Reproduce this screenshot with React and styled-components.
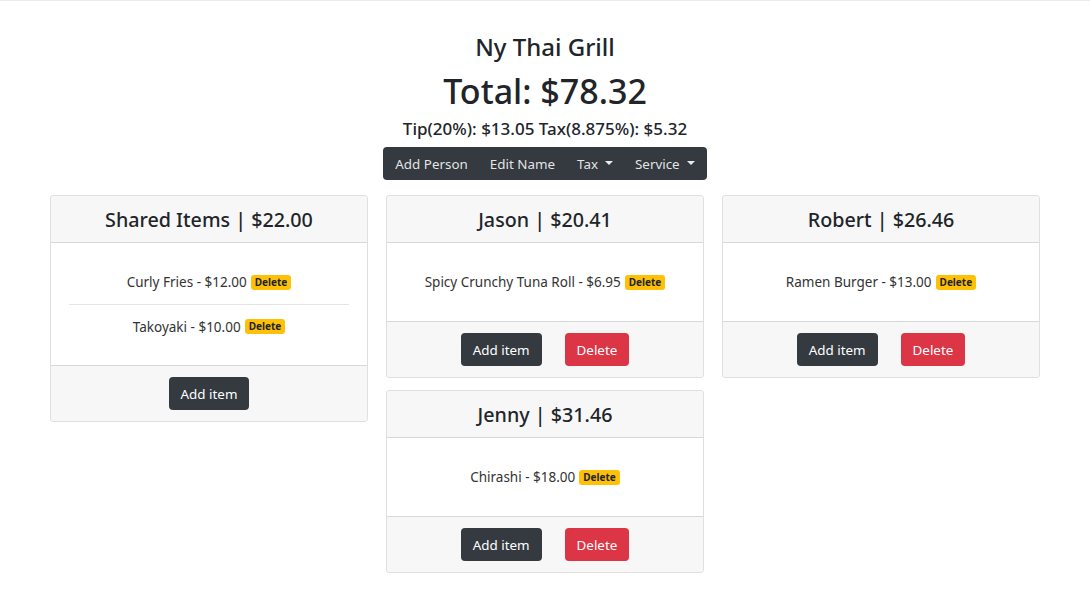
import React from "react";
import styled, { createGlobalStyle } from "styled-components";

const Global = createGlobalStyle`
  html, body { margin: 0; padding: 0; background: #fff; }
  body {
    font-family: "Noto Sans", "Open Sans", sans-serif;
    color: #212529;
    border-top: 1px solid #ececec;
  }
  * { box-sizing: border-box; }
`;

const Page = styled.div`
  width: 990px;
  margin: 0 auto;
  padding-top: 31px;
  display: flex;
  flex-direction: column;
  align-items: center;
`;

const Title = styled.h3`
  margin: 0;
  font-size: 24px;
  font-weight: 500;
  line-height: 30px;
`;

const Total = styled.h1`
  margin: 7px 0 0;
  font-size: 34px;
  font-weight: 500;
  line-height: 44px;
`;

const Sub = styled.h5`
  margin: 4px 0 0;
  font-size: 17px;
  font-weight: 500;
  line-height: 24px;
`;

const Nav = styled.nav`
  margin-top: 6px;
  height: 33px;
  background: #343a40;
  border-radius: 4px;
  display: flex;
  align-items: center;
  padding: 0 12px;
  gap: 22px;
`;

const NavItem = styled.span`
  color: rgba(255, 255, 255, 0.88);
  font-size: 13.4px;
  display: inline-flex;
  align-items: center;
  gap: 7px;
`;

const Caret = styled.span`
  width: 0;
  height: 0;
  border-left: 4.5px solid transparent;
  border-right: 4.5px solid transparent;
  border-top: 4.5px solid rgba(255, 255, 255, 0.9);
  margin-bottom: 1px;
`;

const Columns = styled.div`
  margin-top: 15px;
  width: 100%;
  display: grid;
  grid-template-columns: repeat(3, 1fr);
  column-gap: 18px;
  align-items: start;
`;

const Column = styled.div`
  display: flex;
  flex-direction: column;
  gap: 12px;
`;

const Card = styled.div`
  border: 1px solid rgba(0, 0, 0, 0.125);
  border-radius: 4px;
  overflow: hidden;
  background: #fff;
`;

const CardHeader = styled.div`
  background: #f7f7f7;
  border-bottom: 1px solid rgba(0, 0, 0, 0.125);
  height: 47px;
  display: flex;
  align-items: center;
  justify-content: center;
`;

const CardTitle = styled.h3`
  margin: 0;
  font-size: 19.7px;
  font-weight: 500;
`;

const CardBody = styled.div`
  padding: 17px 18px;
`;

const List = styled.ul`
  list-style: none;
  margin: 0;
  padding: 0;
`;

const Item = styled.li`
  height: 44px;
  display: flex;
  align-items: center;
  justify-content: center;
  gap: 4px;
  font-size: 13.5px;
  color: #333;
  & + & { border-top: 1px solid rgba(0, 0, 0, 0.1); }
`;

const Badge = styled.span`
  background: #ffc107;
  color: #212529;
  font-size: 10px;
  font-weight: 700;
  border-radius: 3px;
  padding: 1px 4px;
  line-height: 13px;
`;

const CardFooter = styled.div`
  background: #f7f7f7;
  border-top: 1px solid rgba(0, 0, 0, 0.125);
  height: 56px;
  display: flex;
  align-items: center;
  justify-content: center;
  gap: 23px;
`;

const Button = styled.button`
  height: 33px;
  border: none;
  border-radius: 4px;
  padding: 0 12px;
  font-family: inherit;
  font-size: 13.4px;
  color: #fff;
  background: ${(p) => (p.$variant === "danger" ? "#dc3545" : "#343a40")};
`;

function PersonCard({ title, items, shared }) {
  return (
    <Card>
      <CardHeader>
        <CardTitle>{title}</CardTitle>
      </CardHeader>
      <CardBody>
        <List>
          {items.map((it) => (
            <Item key={it}>
              {it} <Badge>Delete</Badge>
            </Item>
          ))}
        </List>
      </CardBody>
      <CardFooter>
        <Button>Add item</Button>
        {!shared && <Button $variant="danger">Delete</Button>}
      </CardFooter>
    </Card>
  );
}

export default function App() {
  return (
    <>
      <Global />
      <Page>
        <Title>Ny Thai Grill</Title>
        <Total>Total: $78.32</Total>
        <Sub>Tip(20%): $13.05 Tax(8.875%): $5.32</Sub>
        <Nav>
          <NavItem>Add Person</NavItem>
          <NavItem>Edit Name</NavItem>
          <NavItem>
            Tax <Caret />
          </NavItem>
          <NavItem>
            Service <Caret />
          </NavItem>
        </Nav>
        <Columns>
          <Column>
            <PersonCard
              shared
              title="Shared Items | $22.00"
              items={["Curly Fries - $12.00", "Takoyaki - $10.00"]}
            />
          </Column>
          <Column>
            <PersonCard title="Jason | $20.41" items={["Spicy Crunchy Tuna Roll - $6.95"]} />
            <PersonCard title="Jenny | $31.46" items={["Chirashi - $18.00"]} />
          </Column>
          <Column>
            <PersonCard title="Robert | $26.46" items={["Ramen Burger - $13.00"]} />
          </Column>
        </Columns>
      </Page>
    </>
  );
}
